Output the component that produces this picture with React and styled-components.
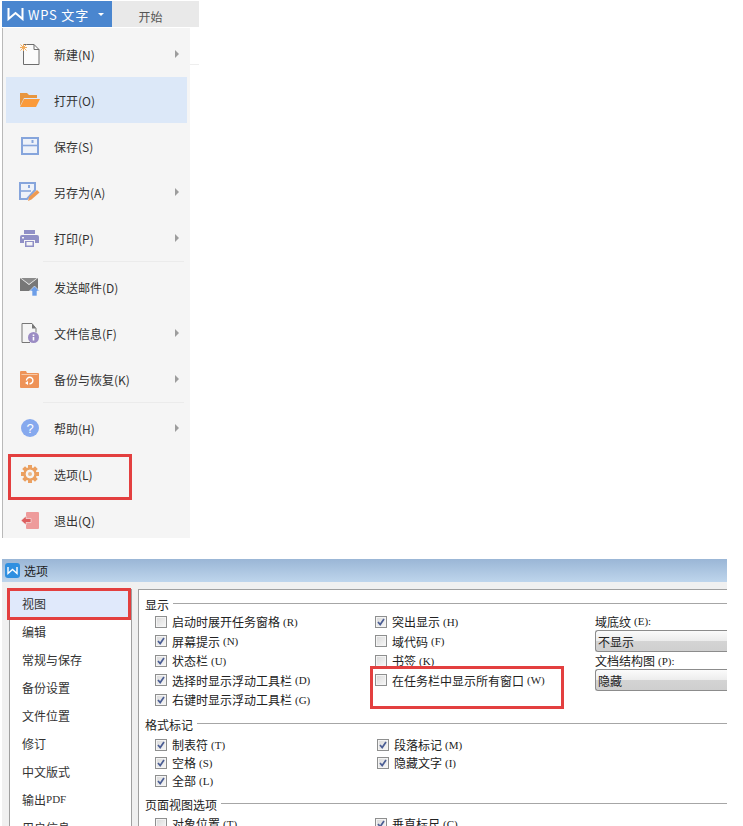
import React from 'react'
import styled, { createGlobalStyle } from 'styled-components'

const GlobalStyle = createGlobalStyle`
  html, body {
    margin: 0;
    padding: 0;
    background: #fff;
  }
  body {
    font-family: "Noto Sans CJK SC", "Liberation Sans", sans-serif;
    overflow: hidden;
  }
`

const Page = styled.div`
  width: 743px;
  height: 826px;
  overflow: hidden;
  display: flex;
  flex-direction: column;
  position: relative;
`

/* ---------- menu ---------- */
const AppBar = styled.div`
  display: flex;
  margin: 1px 0 0 2px;
  height: 26px;
  width: 197px;
`
const AppButton = styled.div`
  width: 110px;
  background: #4a86cf;
  color: #fff;
  display: flex;
  align-items: center;
  padding-left: 5px;
  box-sizing: border-box;
  font-size: 13px;
  letter-spacing: 0.8px;
  svg { flex: none; }
  span { margin-left: 4px; }
  i {
    margin-left: 9px;
    border: 3px solid transparent;
    border-top: 3px solid #fff;
    margin-top: 3px;
  }
`
const AppTab = styled.div`
  flex: 1;
  background: #e9e9e9;
  color: #555;
  font-size: 12px;
  display: flex;
  align-items: center;
  justify-content: center;
  padding: 4px 10px 0 0;
  box-sizing: border-box;
`
const MenuArea = styled.div`
  display: flex;
  margin: 1px 0 0 2px;
`
const MenuPanel = styled.div`
  width: 188px;
  height: 510px;
  box-sizing: border-box;
  background: #f5f5f5;
  border-left: 1px solid #b9b9b9;
  padding: 3px 3px 0 3px;
  overflow: hidden;
`
const RibbonStub = styled.div`
  width: 9px;
  height: 36px;
  border-bottom: 1px solid #eee;
`
const MenuRow = styled.div`
  height: 46px;
  display: flex;
  align-items: center;
  position: relative;
  color: #333;
  font-size: 12px;
  background: ${({ $active }) => ($active ? '#dce8f8' : 'transparent')};
`
const MenuIcon = styled.div`
  width: 48px;
  flex: none;
  display: flex;
  justify-content: center;
  padding-right: 1px;
  box-sizing: border-box;
`
const MenuArrow = styled.i`
  margin-left: auto;
  margin-right: 8px;
  border: 4px solid transparent;
  border-left: 4px solid #9d9d9d;
  border-right: 0;
`
const MenuSep = styled.div`
  height: 1px;
  margin: 0 3px 2px 37px;
  background: #ebebeb;
`

const Highlight = styled.div`
  position: absolute;
  border: 3px solid #e33f3f;
  box-sizing: border-box;
  left: ${({ $x }) => $x}px;
  top: ${({ $y }) => $y}px;
  width: ${({ $w }) => $w}px;
  height: ${({ $h }) => $h}px;
`

const icons = {
  add: (
    <svg width="20" height="21" viewBox="0 0 20 21">
      <path d="M3.500.5h10.500l5 5V20.500H3.500z" fill="#fbfbfb" stroke="#6d6d6d" />
      <path d="M14 .5v5h5" fill="none" stroke="#6d6d6d" />
      <path d="M.5.5l6 6M6.500.5l-6 6M3.500 0v7M0 3.500h7" stroke="#f2ac5c" />
    </svg>
  ),
  open: (
    <svg width="22" height="16" viewBox="0 0 22 16">
      <path d="M1 1h7l2 2h8v3H5L1 14z" fill="#e8963f" />
      <path d="M5 7h16l-4 8H1z" fill="#fb9a3a" />
    </svg>
  ),
  save: (
    <svg width="18" height="18" viewBox="0 0 18 18">
      <rect x="1" y="1" width="16" height="16" fill="#eef2f9" stroke="#86a5dc" strokeWidth="2" />
      <path d="M1 8.500h16" stroke="#86a5dc" strokeWidth="1.600" />
      <rect x="10.500" y="3" width="2" height="3" fill="#86a5dc" />
    </svg>
  ),
  saveAs: (
    <svg width="21" height="20" viewBox="0 0 21 20">
      <path d="M1 1h15v7l-8 9H1z" fill="#eef2f9" stroke="#86a5dc" strokeWidth="2" />
      <path d="M1 9h11" stroke="#86a5dc" strokeWidth="1.600" />
      <rect x="9" y="3" width="2" height="3" fill="#86a5dc" />
      <path d="M9 19l1-4 8-7 2.500 2.500-8 7z" fill="#ee9a52" />
    </svg>
  ),
  print: (
    <svg width="19" height="17" viewBox="0 0 19 17">
      <path d="M4 0h11v4H4z" fill="#8f8fc6" />
      <path d="M2 5h15a2 2 0 0 1 2 2v6h-4v-3H4v3H0V7a2 2 0 0 1 2-2z" fill="#8f8fc6" />
      <path d="M5 11h9v6H5z" fill="#8f8fc6" />
      <path d="M6.500 12h6v3.500h-6z" fill="#f5f5f5" />
      <rect x="2" y="7" width="2" height="1.500" fill="#f5f5f5" />
    </svg>
  ),
  mail: (
    <svg width="20" height="18" viewBox="0 0 20 18">
      <path d="M0 0l9 7 9-7v13H0z" fill="#777" />
      <path d="M1 0h16L9 6z" fill="#8b8b8b" />
      <path d="M14.500 8l5 5H17v5h-5v-5H9.500z" fill="#6d9ee8" stroke="#f5f5f5" strokeWidth="0.600" />
    </svg>
  ),
  info: (
    <svg width="18" height="20" viewBox="0 0 18 20">
      <path d="M9 19.500H1V.5h10l4 5v4" fill="none" stroke="#777" />
      <path d="M11 .5v5h4z" fill="#777" />
      <circle cx="12.500" cy="14.500" r="5.500" fill="#9b8cc4" />
      <rect x="11.700" y="11.500" width="1.600" height="1.600" fill="#fff" />
      <rect x="11.700" y="14" width="1.600" height="3.500" fill="#fff" />
    </svg>
  ),
  backup: (
    <svg width="19" height="17" viewBox="0 0 19 17">
      <path d="M0 1a1 1 0 0 1 1-1h5l1 2h11a1 1 0 0 1 1 1v13a1 1 0 0 1-1 1H1a1 1 0 0 1-1-1z" fill="#ee9358" />
      <path d="M1.500 3.500h16" stroke="#f7c9a7" />
      <path d="M6.500 9.500a3.200 3.200 0 1 1 3 3.200" fill="none" stroke="#fff" strokeWidth="1.400" />
      <path d="M5 12l3-2v4z" fill="#fff" />
    </svg>
  ),
  help: (
    <svg width="18" height="18" viewBox="0 0 18 18">
      <circle cx="9" cy="9" r="9" fill="#86a9ee" />
      <text x="9" y="13.500" textAnchor="middle" fontSize="13" fontWeight="400" fill="#fff" fontFamily="Liberation Sans">?</text>
    </svg>
  ),
  gear: (
    <svg width="18" height="18" viewBox="0 0 18 18">
      <g fill="#eba060">
        <path d="M7 0h4v4H7zM7 14h4v4H7zM0 7h4v4H0zM14 7h4v4h-4z" />
        <path d="M7 0h4v4H7zM7 14h4v4H7zM0 7h4v4H0zM14 7h4v4h-4z" transform="rotate(45 9 9)" />
      </g>
      <circle cx="9" cy="9" r="5.500" fill="none" stroke="#eba060" strokeWidth="2.500" />
      <circle cx="9" cy="9" r="4.200" fill="#f5f5f5" />
      <circle cx="9" cy="9" r="2" fill="#ebb98a" />
    </svg>
  ),
  exit: (
    <svg width="18" height="17" viewBox="0 0 18 17">
      <path d="M5 1a1 1 0 0 1 1-1h11a1 1 0 0 1 1 1v15a1 1 0 0 1-1 1H6a1 1 0 0 1-1-1z" fill="#ee9b9b" />
      <path d="M0 8.500L5 4v2.500h5v4H5V13z" fill="#dd5f5f" stroke="#f5f5f5" strokeWidth="0.600" />
    </svg>
  ),
}

const menuGroups = [
  [
    { icon: 'add', label: '新建(N)', arrow: true },
    { icon: 'open', label: '打开(O)', active: true },
    { icon: 'save', label: '保存(S)' },
    { icon: 'saveAs', label: '另存为(A)', arrow: true },
    { icon: 'print', label: '打印(P)', arrow: true },
  ],
  [
    { icon: 'mail', label: '发送邮件(D)' },
    { icon: 'info', label: '文件信息(F)', arrow: true },
    { icon: 'backup', label: '备份与恢复(K)', arrow: true },
  ],
  [
    { icon: 'help', label: '帮助(H)', arrow: true },
    { icon: 'gear', label: '选项(L)' },
    { icon: 'exit', label: '退出(Q)' },
  ],
]

/* ---------- dialog ---------- */
const Dialog = styled.div`
  margin: 21px 0 0 2px;
  width: 725px;
  height: 267px;
  display: flex;
  flex-direction: column;
  overflow: hidden;
  flex: none;
`
const TitleBar = styled.div`
  height: 23px;
  flex: none;
  background: linear-gradient(#9ab6d6, #bed5ec);
  display: flex;
  align-items: center;
  padding-left: 3px;
  font-size: 12px;
  color: #222;
  span { margin-left: 4px; }
`
const DialogBody = styled.div`
  flex: 1;
  display: flex;
  background: #f0f0f0;
  padding: 7px 0 0 7px;
  min-height: 0;
`
const Sidebar = styled.div`
  width: 123px;
  box-sizing: border-box;
  flex: none;
  background: #fff;
  border: 1px solid #a0a0a0;
  border-bottom: 0;
`
const SideItem = styled.div`
  height: 28px;
  box-sizing: border-box;
  display: flex;
  align-items: center;
  padding: 0 0 2px 12px;
  font-size: 12px;
  color: #333;
  background: ${({ $active }) => ($active ? '#e0e9fb' : 'transparent')};
`
const Pdf = styled.span`
  font-family: "Liberation Serif", serif;
  font-size: 11px;
`
const Panel = styled.div`
  margin-left: 6px;
  flex: 1;
  min-width: 0;
  overflow: hidden;
  background: #fff;
  border-top: 1px solid #a0a0a0;
  border-left: 1px solid #a0a0a0;
  padding: 6px 0 0 6px;
  color: #222;
  font-size: 12px;
`
const Legend = styled.div`
  height: 16px;
  display: flex;
  align-items: center;
  margin-top: ${({ $gap }) => $gap || 0}px;
  &::after {
    content: "";
    flex: 1;
    height: 1px;
    margin-left: 4px;
    background: #a6a6a6;
    transform: translateY(-1px);
  }
`
const OptionGrid = styled.div`
  display: grid;
  grid-template-columns: ${({ $second }) => $second}px ${({ $third }) => $third || 0}px 1fr;
  padding-left: 10px;
  margin-top: ${({ $gap }) => $gap || 0}px;
`
const OptionColumn = styled.div`
  display: flex;
  flex-direction: column;
`
const OptionRow = styled.div`
  height: ${({ $h }) => $h}px;
  display: flex;
  align-items: center;
  white-space: nowrap;
`
const Box = styled.span`
  width: 12px;
  height: 12px;
  box-sizing: border-box;
  flex: none;
  margin-right: 5px;
  border: 1px solid #8e8f8f;
  box-shadow: inset 0 0 0 1px #f4f4f4;
  background: linear-gradient(135deg, #d8d8d8, #f8f8f8);
  display: flex;
  svg { display: block; }
`
const Key = styled.span`
  font-family: "Liberation Serif", serif;
  font-size: 11px;
  margin-left: 3px;
`
const FieldColumn = styled.div`
  display: flex;
  flex-direction: column;
  width: 132px;
`
const FieldLabel = styled.div`
  height: ${({ $h }) => $h}px;
  display: flex;
  align-items: center;
  white-space: nowrap;
`
const Select = styled.div`
  height: 20px;
  border: 1px solid #8c8c8c;
  border-right: 0;
  border-radius: 3px 0 0 3px;
  background: linear-gradient(#fbfbfb, #ececec 50%, #d4d4d4 50%, #cfcfcf);
  display: flex;
  align-items: center;
  padding-left: 2px;
`

function Check({ checked, label, k, h }) {
  return (
    <OptionRow $h={h}>
      <Box>
        {checked && (
          <svg width="10" height="10" viewBox="0 0 10 10">
            <path d="M2 5l2.200 2.600L8 2" fill="none" stroke="#4a5d94" strokeWidth="1.700" />
          </svg>
        )}
      </Box>
      {label}
      <Key>{k}</Key>
    </OptionRow>
  )
}

const sideItems = ['编辑', '常规与保存', '备份设置', '文件位置', '修订', '中文版式']

export default function App() {
  return (
    <Page>
      <GlobalStyle />
      <AppBar>
        <AppButton>
          <svg width="17" height="14" viewBox="0 0 17 14">
            <path d="M1.500 1v11L8.500 6l7 6V1" fill="none" stroke="#fff" strokeWidth="2" />
          </svg>
          <span>WPS 文字</span>
          <i />
        </AppButton>
        <AppTab>开始</AppTab>
      </AppBar>
      <MenuArea>
        <MenuPanel>
          {menuGroups.map((group, g) => (
            <React.Fragment key={g}>
              {group.map((item) => (
                <MenuRow key={item.label} $active={item.active}>
                  <MenuIcon>{icons[item.icon]}</MenuIcon>
                  {item.label}
                  {item.arrow && <MenuArrow />}
                </MenuRow>
              ))}
              {g < 2 && <MenuSep />}
            </React.Fragment>
          ))}
        </MenuPanel>
        <RibbonStub />
      </MenuArea>

      <Dialog>
        <TitleBar>
          <svg width="15" height="15" viewBox="0 0 15 15">
            <rect width="15" height="15" rx="3" fill="#2f8fe0" />
            <path d="M3 4v6.500L7.500 6.500 12 10.500V4" fill="none" stroke="#fff" strokeWidth="1.400" />
          </svg>
          <span>选项</span>
        </TitleBar>
        <DialogBody>
          <Sidebar>
            <SideItem $active>视图</SideItem>
            {sideItems.map((s) => (
              <SideItem key={s}>{s}</SideItem>
            ))}
            <SideItem>输出<Pdf>PDF</Pdf></SideItem>
            <SideItem>用户信息</SideItem>
          </Sidebar>
          <Panel>
            <Legend>显示</Legend>
            <OptionGrid $second={220} $third={220}>
              <OptionColumn>
                <Check h={19.5} label="启动时展开任务窗格" k="(R)" />
                <Check h={19.5} checked label="屏幕提示" k="(N)" />
                <Check h={19.5} checked label="状态栏" k="(U)" />
                <Check h={19.5} checked label="选择时显示浮动工具栏" k="(D)" />
                <Check h={19.5} checked label="右键时显示浮动工具栏" k="(G)" />
              </OptionColumn>
              <OptionColumn>
                <Check h={19.5} checked label="突出显示" k="(H)" />
                <Check h={19.5} label="域代码" k="(F)" />
                <Check h={19.5} label="书签" k="(K)" />
                <Check h={19.5} label="在任务栏中显示所有窗口" k="(W)" />
              </OptionColumn>
              <FieldColumn>
                <FieldLabel $h={18}>域底纹<Key>(E):</Key></FieldLabel>
                <Select>不显示</Select>
                <FieldLabel $h={17}>文档结构图<Key>(P):</Key></FieldLabel>
                <Select>隐藏</Select>
              </FieldColumn>
            </OptionGrid>
            <Legend $gap={7}>格式标记</Legend>
            <OptionGrid $second={222} $gap={3}>
              <OptionColumn>
                <Check h={18} checked label="制表符" k="(T)" />
                <Check h={18} checked label="空格" k="(S)" />
                <Check h={18} checked label="全部" k="(L)" />
              </OptionColumn>
              <OptionColumn>
                <Check h={18} checked label="段落标记" k="(M)" />
                <Check h={18} checked label="隐藏文字" k="(I)" />
              </OptionColumn>
            </OptionGrid>
            <Legend $gap={7}>页面视图选项</Legend>
            <OptionGrid $second={220} $third={220} $gap={2}>
              <OptionColumn>
                <Check h={18} label="对象位置" k="(T)" />
              </OptionColumn>
              <OptionColumn>
                <Check h={18} checked label="垂直标尺" k="(C)" />
              </OptionColumn>
            </OptionGrid>
          </Panel>
        </DialogBody>
      </Dialog>

      <Highlight $x={8} $y={454} $w={124} $h={46} />
      <Highlight $x={7} $y={588} $w={124} $h={32} />
      <Highlight $x={370} $y={666} $w={194} $h={43} />
    </Page>
  )
}
